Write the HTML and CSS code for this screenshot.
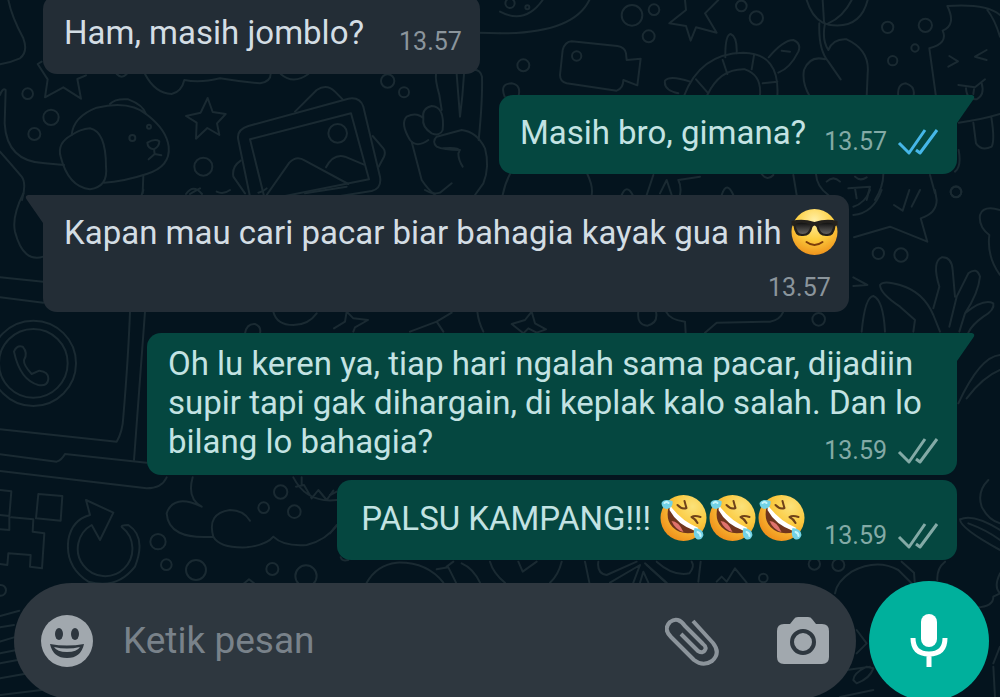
FILE: index.html
```html
<!DOCTYPE html>
<html lang="id">
<head>
    <meta charset="UTF-8">
    <meta name="viewport" content="width=device-width, initial-scale=1.0">
    <title>Chat</title>
    <link rel="stylesheet" href="styles.css">
</head>
<body>
    <!-- wallpaper doodles -->
    <svg class="wallpaper" viewBox="0 0 3000 2091" preserveAspectRatio="xMidYMid slice" aria-hidden="true">
        <g>
            <path d="M25 0Q35 50 70 115Q85 155 60 175Q30 188 0 193"/>
            <path d="M125 185L113 192L143 238L135 292L190 262L243 296L232 237L258 226"/>
            <circle cx="83" cy="281" r="16"/><circle cx="153" cy="352" r="23"/><circle cx="103" cy="402" r="18"/>
            <path d="M0 285Q8 262 17 270L14 370Q20 485 135 490L192 495M0 455Q40 500 65 530Q80 550 66 600"/>
            <path d="M215 405Q220 350 290 323Q390 300 442 345Q500 390 506 440Q512 500 440 522Q370 545 312 548"/>
            <path d="M215 405Q170 430 182 470Q205 560 270 568Q325 560 318 500Q318 395 270 385Q240 388 215 405Z"/>
            <path d="M330 312Q345 295 385 298Q430 315 438 342M430 525L428 580"/>
            <path d="M442 428Q465 415 478 424Q478 440 462 448Q443 446 442 428M462 448L464 462L446 478M464 462L484 466"/>
            <circle cx="397" cy="414" r="9"/><circle cx="447" cy="380" r="6"/>
            <path d="M435 222Q465 280 515 282Q545 275 553 240Q600 250 660 235Q720 245 780 250Q812 245 812 222M842 222Q880 255 925 222M350 222Q365 238 380 222"/>
            <path d="M623 294L638 336L677 342L651 370L658 405L622 384L588 416L590 368L558 348L602 338Z"/>
            <circle cx="610" cy="500" r="27"/><path d="M558 582Q580 550 606 582"/>
            <path d="M715 420Q708 390 745 378L1045 296Q1080 290 1090 320L1140 530Q1146 565 1115 573L945 600M715 420L752 600"/>
            <path d="M750 418L1053 340L1107 538L795 600Z"/>
            <path d="M800 585L868 488Q890 465 915 482L1045 552M978 502Q1000 460 1035 470L1092 494"/>
            <circle cx="1013" cy="400" r="28"/>
            <path d="M885 335L950 270Q980 250 1005 275L1028 298M1118 408L1150 445Q1158 455 1152 470L1136 500M722 482Q695 500 700 530L735 580"/>
            <circle cx="1163" cy="243" r="20"/><circle cx="1212" cy="277" r="15"/>
            <path d="M1308 222Q1305 240 1318 285L1325 330M1370 222L1380 350Q1388 290 1392 222M1415 210Q1440 205 1446 230Q1448 300 1436 420"/>
            <path d="M1285 420Q1250 445 1230 420Q1200 370 1220 350Q1250 335 1270 355Q1265 325 1295 318Q1335 320 1328 390Q1320 410 1295 400Q1265 380 1270 355"/>
            <path d="M1380 450Q1330 450 1310 440Q1295 425 1310 410L1385 390Q1430 395 1455 445Q1470 500 1450 550L1425 585M1330 445Q1390 440 1375 460Q1375 480 1388 500M1235 425L1265 540Q1285 570 1305 585"/>
            <path d="M1436 98L1500 100"/>
        </g>
        <g transform="translate(1500 0)">
            <path d="M0 100Q220 100 268 0M0 35Q75 75 128 0"/><circle cx="30" cy="10" r="14"/><circle cx="82" cy="22" r="6"/>
            <circle cx="396" cy="46" r="31"/><circle cx="462" cy="29" r="16"/><circle cx="446" cy="109" r="18"/>
            <path d="M555 0L558 30L508 70L558 78L572 122L588 82L650 98L615 40L655 0"/>
            <circle cx="724" cy="18" r="16"/><circle cx="769" cy="54" r="20"/>
            <path d="M215 124L352 138Q375 142 378 160L380 180L422 176L412 256L370 240Q370 265 350 272L200 250Q180 245 180 225L188 150Q195 125 215 124Z"/>
            <circle cx="230" cy="168" r="14"/><circle cx="70" cy="196" r="18"/><path d="M14 290Q-2 250 35 250Q65 255 55 290"/>
            <path d="M552 288Q600 160 730 158Q840 160 832 288M622 285Q660 205 735 208Q785 225 780 285M668 180L682 222M762 166L755 208M788 250L832 245M588 238L625 280"/>
            <path d="M676 172Q675 105 692 102Q712 110 710 160M806 172Q850 120 880 120Q905 130 895 155Q870 205 835 218M570 245Q510 225 495 242Q490 270 535 280M845 152L870 155"/>
            <path d="M920 0Q935 50 968 68L985 74Q1080 90 1103 0M1055 0Q1030 50 985 70M968 0L972 65M958 70Q955 150 985 185L1022 238M975 70Q965 120 985 150M975 178Q930 165 912 210Q905 250 930 290M985 150Q1000 115 1040 118Q1110 150 1103 220L1100 290"/>
            <circle cx="1163" cy="82" r="17"/><circle cx="1276" cy="76" r="20"/><circle cx="1245" cy="144" r="11"/><circle cx="1178" cy="182" r="14"/>
            <path d="M1195 290Q1190 252 1218 250Q1248 260 1240 290M1500 45Q1460 10 1342 18Q1370 75 1328 92Q1345 130 1288 145L1308 290M1462 30Q1485 60 1500 110"/>
            <path d="M1348 168L1374 184L1345 200M1460 150L1425 170L1460 180M1375 255L1425 262L1455 238M1398 265Q1400 300 1430 298Q1455 285 1445 250M1422 268L1420 282"/>
            <path d="M1376 368Q1440 360 1500 342M1420 368L1428 430Q1445 455 1475 440Q1485 420 1474 352M1376 450Q1385 500 1365 515"/>
            <path d="M8 585Q15 550 30 522M262 522Q280 560 275 585M460 525L440 585M540 585Q545 560 535 540L600 530M480 580L500 540L515 585M785 522Q802 545 820 525M880 525L890 585M948 522Q950 560 985 585M1150 522Q1150 560 1125 600M1290 525L1305 580M980 545Q1000 525 1020 545M1065 530Q1080 545 1100 532M1045 565L1110 560L1100 600M1065 565L1070 595"/>
            <circle cx="1368" cy="575" r="16"/><path d="M365 585Q380 550 398 585M665 585Q680 540 700 585"/>
        </g>
        <g transform="translate(0 570)">
            <path d="M70 10Q35 80 45 125Q70 220 130 200M430 0L425 15M0 262L130 275M0 322L130 338"/>
            <circle cx="100" cy="520" r="128"/><circle cx="100" cy="520" r="103"/>
            <path d="M42 485Q50 465 68 470Q85 490 72 510Q70 525 95 552L118 542Q145 545 145 565Q145 590 115 585Q60 570 42 485Z"/>
            <path d="M390 365Q385 500 370 680Q368 725 350 755L0 718M435 365L402 810"/>
            <path d="M820 365Q830 405 880 405Q925 405 950 370M735 430Q740 400 765 402Q785 410 780 430M1002 415L1035 395L1040 365L1060 385L1104 390L1065 412L1060 425M1230 425L1310 395L1355 368M1310 395L1330 425M1432 365Q1435 395 1450 425"/>
            <path d="M570 12Q590 0 600 -5M650 5Q670 15 690 0M775 8Q790 5 800 -5M915 10L1040 -10M1275 0Q1300 15 1320 8L1355 -20"/>
        </g>
        <g transform="translate(1500 570)">
            <path d="M1145 0Q1120 70 1060 75M1110 0Q1095 40 1060 50M1182 45L1208 62L1228 0M1235 50L1260 0M1305 0L1310 30Q1310 70 1262 85L1282 155L1170 110L1062 142"/>
            <circle cx="1368" cy="6" r="16"/><circle cx="1135" cy="190" r="17"/><circle cx="1203" cy="195" r="20"/><circle cx="956" cy="388" r="19"/>
            <path d="M1500 60Q1450 45 1440 75Q1435 110 1468 135Q1460 200 1500 255M1060 262L1102 285L1060 288"/>
            <path d="M1240 425L1245 390L1200 350Q1140 310 1140 285Q1150 270 1200 285Q1270 305 1300 375L1320 425M1300 355L1318 290Q1295 215 1325 202Q1355 200 1358 240L1365 320M1348 410L1370 320L1405 250Q1430 230 1440 260Q1435 310 1395 370L1378 425M1395 370Q1450 325 1480 340Q1485 360 1450 380Q1415 405 1405 428M1085 425Q1095 320 1120 318Q1150 330 1155 425"/>
            <path d="M415 365Q410 405 442 407Q475 400 468 365M498 365Q510 390 555 395L557 428M615 428L650 398L810 395Q840 390 850 365M35 402L75 390L95 365L105 400L138 418L110 428L85 415L70 430Z"/>
            <path d="M1375 640Q1440 500 1500 495M1400 625Q1450 560 1500 540"/>
        </g>
        <g transform="translate(0 1170)">
            <path d="M0 193L170 215Q185 210 195 192L440 218M0 243L440 295Q485 295 500 262"/>
            <path d="M0 300L34 304L28 378L0 375M115 312L187 318L182 392L108 385ZM34 382L100 388L98 425L133 430L126 535L90 530L92 495L25 490L22 525L0 522M28 380L28 420L0 418"/>
            <path d="M300 450L275 405A82 82 0 1 0 366 412Q360 405 385 405Q440 440 405 530Q350 600 265 575Q195 530 205 450Q215 390 270 375L258 330L340 368Z"/>
            <path d="M578 262Q560 325 605 350Q520 310 500 370Q505 450 640 440Q620 370 690 360Q730 360 750 392M640 440Q660 475 740 472Q800 465 820 440Q850 470 920 465Q980 450 1010 405M880 262Q920 340 1010 330M888 290L912 285L935 325L955 300L980 330L1000 302M905 262L905 282"/>
            <circle cx="842" cy="306" r="20"/><circle cx="791" cy="353" r="16"/><circle cx="883" cy="365" r="19"/><circle cx="474" cy="455" r="23"/><circle cx="499" cy="524" r="16"/><circle cx="588" cy="540" r="30"/><circle cx="817" cy="537" r="18"/><circle cx="918" cy="558" r="32"/><circle cx="2" cy="601" r="16"/>
            <path d="M730 582L747 568L765 582M0 678L58 662M0 712L42 705M0 755L42 742M0 790L50 780M0 820L65 808M0 865L85 850M0 915L125 900"/>
        </g>
        <g transform="translate(990 1410)">
            <path d="M0 75L20 65M0 190L22 165M110 338Q140 285 200 278Q290 275 340 338M320 298L355 292L378 338M350 290L370 275M395 280Q430 295 450 338M480 275Q490 310 525 338M565 275L578 305L620 275M695 275Q685 315 660 338M765 275L778 338M805 275Q800 310 830 315L920 275M840 338L930 285L910 338M930 338L940 305L955 338M945 280L1010 338M32 262Q35 275 55 270"/>
        </g>
        <g transform="translate(1920 1440)">
            <path d="M50 245Q100 290 148 280Q165 260 155 245M182 245L175 305M20 255L75 305M230 305L245 290L260 305L285 265L320 308"/>
            <circle cx="370" cy="294" r="13"/><circle cx="595" cy="255" r="18"/><circle cx="523" cy="252" r="17"/>
            <path d="M585 340Q590 305 635 275Q710 235 775 270L820 315M785 245L822 278L824 305M915 245Q890 265 892 300M1045 0Q1010 35 1025 80Q1045 120 1080 130M960 118Q1000 100 1080 150M960 118Q960 145 1080 210M985 130Q1040 150 1080 180M1080 280Q1060 320 1080 340L1060 350Q1060 380 1010 382M650 450L680 490L650 520M640 600Q640 580 680 560L700 565Q690 595 650 610ZM620 570L690 560M1060 550L1080 500M1060 560L1065 651M600 651L700 630"/>
        </g>
    </svg>

    <!-- emoji shapes, reused in the messages -->
    <svg class="defs" aria-hidden="true">
        <defs>
            <radialGradient id="face" cx="50%" cy="25%" r="75%">
                <stop offset="0" stop-color="#fff0a8"/>
                <stop offset=".55" stop-color="#fdce3e"/>
                <stop offset="1" stop-color="#ef941d"/>
            </radialGradient>
            <radialGradient id="tilted" cx="70%" cy="25%" r="80%">
                <stop offset="0" stop-color="#fbe27a"/>
                <stop offset=".5" stop-color="#fbc93f"/>
                <stop offset="1" stop-color="#f0921c"/>
            </radialGradient>
            <linearGradient id="lens" x1="0" y1="0" x2="0" y2="1">
                <stop offset="0" stop-color="#111"/>
                <stop offset="1" stop-color="#666461"/>
            </linearGradient>
            <symbol id="cool" viewBox="0 0 48 48">
                <circle cx="24" cy="24" r="23" fill="url(#face)"/>
                <path d="M1 13Q12 10 24 14Q36 10 47 13V17L45 18Q44 28 37 28Q28 29 26 19Q24 16 22 19Q20 29 11 28Q4 28 3 18L1 17Z" fill="#24211d"/>
                <path d="M5 16Q12 13 20 17Q19 26 12 26Q6 26 5 16ZM43 16Q36 13 28 17Q29 26 36 26Q42 26 43 16Z" fill="url(#lens)"/>
                <path d="M16 34Q24 40 32 34" fill="none" stroke="#7b3d0b" stroke-width="2" stroke-linecap="round"/>
            </symbol>
            <symbol id="rofl" viewBox="0 0 48 48">
                <circle cx="24" cy="24" r="23" fill="url(#tilted)"/>
                <path d="M9 13Q6 26 13 33Q22 42 37 38Q21 30 9 13Z" fill="#70351d"/>
                <path d="M12 27Q19 27 24 38Q16 36 12 27Z" fill="#e0736d"/>
                <path d="M11 12Q22 27 39 34L36 37Q18 31 10 16Z" fill="#fff"/>
                <path d="M18 11Q23 16 27 14Q26 11 25 7M41 23Q35 21 32 23Q36 25 38 29" fill="none" stroke="#70431a" stroke-width="2" stroke-linecap="round" stroke-linejoin="round"/>
                <path d="M13 7Q14 14 7 15Q2 14 2 9Q4 4 13 7ZM35 34Q44 35 44 41Q42 47 37 45Q33 42 35 34Z" fill="#72d2e6"/>
                <path d="M5 9Q7 7 9 9M38 38Q41 39 41 42" fill="none" stroke="#c5f5fa" stroke-width="2" stroke-linecap="round"/>
            </symbol>
            <symbol id="ticks" viewBox="0 0 42 26">
                <path d="M2 14L12 24L28 1M19 21L23 24L40 1" fill="none" stroke="currentColor" stroke-width="3" stroke-linejoin="round"/>
            </symbol>
        </defs>
    </svg>

    <main class="chat">
        <div class="message incoming">
            <p class="text">Ham, masih jomblo?</p>
            <div class="meta"><time>13.57</time></div>
        </div>
        <div class="message outgoing tail">
            <p class="text">Masih bro, gimana?</p>
            <div class="meta"><time>13.57</time><svg class="ticks read" role="img" aria-label="Dibaca"><use href="#ticks"/></svg></div>
        </div>
        <div class="message incoming tail stacked">
            <p class="text">Kapan mau cari pacar biar bahagia kayak gua nih <svg class="emoji" role="img" aria-label="😎"><use href="#cool"/></svg></p>
            <div class="meta"><time>13.57</time></div>
        </div>
        <div class="message outgoing tail long">
            <p class="text">Oh lu keren ya, tiap hari ngalah sama pacar, dijadiin supir tapi gak dihargain, di keplak kalo salah. Dan lo bilang lo bahagia? <span class="meta"><time>13.59</time><svg class="ticks" role="img" aria-label="Terkirim"><use href="#ticks"/></svg></span></p>
        </div>
        <div class="message outgoing follow">
            <p class="text">PALSU KAMPANG!!! <svg class="emoji" role="img" aria-label="🤣"><use href="#rofl"/></svg><svg class="emoji" role="img" aria-label="🤣"><use href="#rofl"/></svg><svg class="emoji" role="img" aria-label="🤣"><use href="#rofl"/></svg></p>
            <div class="meta"><time>13.59</time><svg class="ticks" role="img" aria-label="Terkirim"><use href="#ticks"/></svg></div>
        </div>
    </main>

    <form class="composer">
        <div class="field">
            <button type="button" class="icon-btn" aria-label="Emoji">
                <svg width="52" height="52" viewBox="0 0 52 52">
                    <circle cx="26" cy="26" r="26" fill="#a1a8ae"/>
                    <ellipse cx="18" cy="19" rx="4" ry="6" fill="#2e373f"/>
                    <ellipse cx="34" cy="19" rx="4" ry="6" fill="#2e373f"/>
                    <path d="M9 29Q26 32 43 29Q40 43 26 43Q12 43 9 29Z" fill="#2e373f"/>
                    <path d="M13 32Q26 35 39 32Q36 37 26 37Q16 37 13 32Z" fill="#a1a8ae"/>
                </svg>
            </button>
            <input type="text" placeholder="Ketik pesan" aria-label="Ketik pesan">
            <button type="button" class="icon-btn" aria-label="Lampirkan">
                <svg width="54" height="50" viewBox="0 0 54 50">
                    <path d="M16 18L33 35Q38 38 40 34Q42 31 38 28L20 10Q13 0 5 6Q-2 13 6 21L29 44Q38 51 47 45Q56 37 48 27L28 5" fill="none" stroke="#8c949b" stroke-width="4" stroke-linejoin="round"/>
                </svg>
            </button>
            <button type="button" class="icon-btn" aria-label="Kamera">
                <svg width="52" height="48" viewBox="0 0 52 48">
                    <path d="M7 7H13L17 2Q18 0 21 0H31Q34 0 35 2L39 7H45Q52 7 52 14V40Q52 47 45 47H7Q0 47 0 40V14Q0 7 7 7Z" fill="#a1a8ae"/>
                    <circle cx="26" cy="25" r="11" fill="none" stroke="#2e373f" stroke-width="4"/>
                </svg>
            </button>
        </div>
        <button type="button" class="mic" aria-label="Pesan suara">
            <svg width="38" height="54" viewBox="0 0 38 54">
                <rect x="11" y="0" width="16" height="33" rx="8" fill="#fff"/>
                <path d="M3 24Q3 40 19 40Q35 40 35 24M19 40V53" fill="none" stroke="#fff" stroke-width="5"/>
            </svg>
        </button>
    </form>
</body>
</html>
```
FILE: styles.css
```css
* {
    box-sizing: border-box;
}
body {
    margin: 0;
    height: 100vh;
    display: flex;
    flex-direction: column;
    overflow: hidden;
    background-color: #04141e;
    font-family: Roboto, sans-serif;
}
.wallpaper {
    position: absolute;
    inset: 0;
    z-index: -1;
    width: 100%;
    height: 100%;
    fill: none;
    stroke: #1a2a32;
    stroke-width: 6;
    stroke-linecap: round;
    stroke-linejoin: round;
}
.defs {
    position: absolute;
    width: 0;
    height: 0;
}
.chat {
    flex: 1;
    min-height: 0;
    display: flex;
    flex-direction: column;
    justify-content: flex-end;
    gap: 21px;
    padding: 0 43px 23px;
    overflow: hidden;
}
.message {
    position: relative;
    flex-shrink: 0;
    display: flex;
    align-items: flex-end;
    column-gap: 18px;
    max-width: 810px;
    padding: 18px 18px 22px 21px;
    border-radius: 14px;
}
.incoming {
    align-self: flex-start;
    column-gap: 35px;
    background-color: #232d36;
    color: #d3dde4;
}
.outgoing {
    align-self: flex-end;
    background-color: #054740;
    color: #c3e3e3;
}
.text {
    margin: 0;
    font-size: 33px;
    line-height: 39px;
}
.meta {
    display: flex;
    align-items: center;
    gap: 10px;
    margin-bottom: -4px;
    font-size: 25px;
    line-height: 28px;
    color: #8b959c;
}
.outgoing .meta {
    color: #83aaa6;
}
.tail::before {
    content: "";
    position: absolute;
    top: 0;
    width: 18px;
    height: 28px;
    background-color: inherit;
    clip-path: path("M0 0H15Q19 1 16 5L0 28Z");
}
.outgoing.tail {
    border-top-right-radius: 0;
}
.outgoing.tail::before {
    left: 100%;
}
.incoming.tail {
    border-top-left-radius: 0;
}
.incoming.tail::before {
    right: 100%;
    transform: scaleX(-1);
}
/* time on a line of its own */
.stacked {
    flex-direction: column;
    row-gap: 22px;
    padding-bottom: 14px;
}
.stacked .text {
    margin-right: -8px;
}
/* time floats into the last line of the text */
.long {
    display: block;
    padding-top: 11px;
    padding-bottom: 14px;
}
.long .meta {
    float: right;
    margin-top: 15px;
}
.follow {
    margin-top: -16px;
    padding: 19px 18px 14px 24px;
}
.follow .text {
    margin-bottom: 8px;
}
.emoji {
    width: 49px;
    height: 48px;
    margin: -5px 0;
    vertical-align: -7px;
}
.ticks {
    width: 42px;
    height: 26px;
}
.read {
    color: #46b7e8;
}
.composer {
    flex-shrink: 0;
    display: flex;
    align-items: center;
    gap: 13px;
    height: 116px;
    margin-bottom: -2px;
    padding: 0 11px 0 14px;
}
.field {
    flex: 1;
    min-width: 0;
    height: 116px;
    display: flex;
    align-items: center;
    gap: 30px;
    padding: 0 27px;
    border-radius: 58px;
    background-color: #2e373f;
}
.field input {
    flex: 1;
    min-width: 0;
    padding: 0;
    border: 0;
    outline: 0;
    background: none;
    color: #d3dde4;
    font: 37px/44px Roboto, sans-serif;
}
.field input::placeholder {
    color: #79828a;
    opacity: 1;
}
.icon-btn {
    display: flex;
    padding: 0;
    border: 0;
    background: none;
}
.icon-btn + .icon-btn {
    margin-left: 28px;
}
.mic {
    flex-shrink: 0;
    display: flex;
    align-items: center;
    justify-content: center;
    width: 120px;
    height: 120px;
    padding: 0;
    border: 0;
    border-radius: 50%;
    background-color: #00b09c;
}
```
